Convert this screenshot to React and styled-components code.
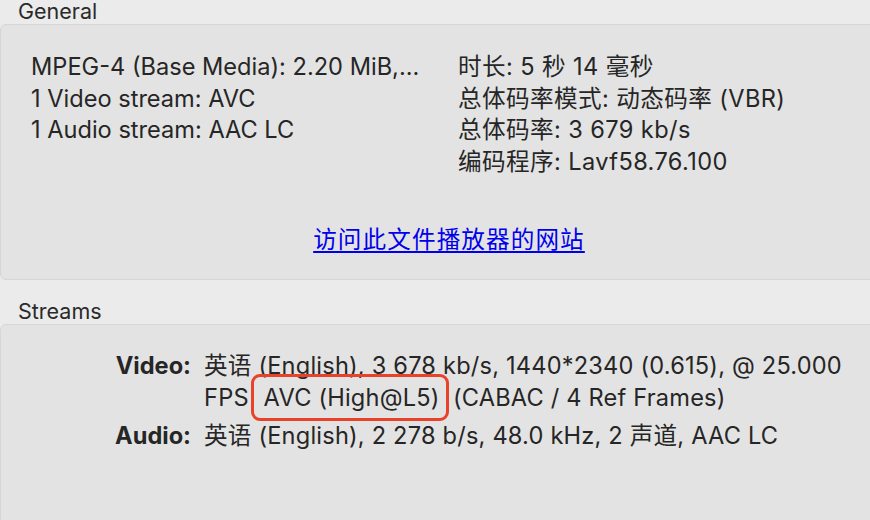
import React from 'react';
import styled, { createGlobalStyle } from 'styled-components';

const Global = createGlobalStyle`
  html, body {
    margin: 0;
    padding: 0;
    background: #ebebeb;
    overflow: hidden;
  }
  body {
    font-family: Inter, "Noto Sans CJK SC", sans-serif;
    color: #262626;
  }
`;

const general = {
  left: [
    'MPEG-4 (Base Media): 2.20 MiB,...',
    '1 Video stream: AVC',
    '1 Audio stream: AAC LC',
  ],
  right: [
    '时长: 5 秒 14 毫秒',
    '总体码率模式: 动态码率 (VBR)',
    '总体码率: 3 679 kb/s',
    '编码程序: Lavf58.76.100',
  ],
};

export default function App() {
  return (
    <Page>
      <Global />
      <SectionTitle>General</SectionTitle>
      <Panel $height={256}>
        <Columns>
          <Column>
            {general.left.map((t) => <Line key={t}>{t}</Line>)}
          </Column>
          <Column $spacing={0.4}>
            {general.right.map((t) => <Line key={t}>{t}</Line>)}
          </Column>
        </Columns>
        <LinkRow>
          <SiteLink href="#">访问此文件播放器的网站</SiteLink>
        </LinkRow>
      </Panel>
      <SectionTitle $top={20}>Streams</SectionTitle>
      <Panel $height={220}>
        <StreamGrid>
          <Label>Video:</Label>
          <Value>
            英语 (English), 3 678 kb/s, 1440*2340 (0.615), @ 25.000
            <br />
            FPS <Highlight>AVC (High@L5)</Highlight> (CABAC / 4 Ref Frames)
          </Value>
          <Label>Audio:</Label>
          <Value>英语 (English), 2 278 b/s, 48.0 kHz, 2 声道, AAC LC</Value>
        </StreamGrid>
      </Panel>
    </Page>
  );
}

const Page = styled.div`
  width: 870px;
  height: 520px;
  overflow: hidden;
`;

const SectionTitle = styled.div`
  box-sizing: border-box;
  padding: ${(p) => p.$top || 0}px 0 0 18px;
  height: ${(p) => (p.$top || 0) + 24}px;
  font-size: 21.5px;
  line-height: 23px;
  color: #2a2a2a;
`;

const Panel = styled.div`
  box-sizing: border-box;
  height: ${(p) => p.$height}px;
  width: 890px;
  background: #e3e3e3;
  border: 1px solid #d6d6d6;
  border-radius: 6px;
  padding-top: 25px;
`;

const Columns = styled.div`
  display: grid;
  grid-template-columns: 427px auto;
  padding-left: 30px;
  padding-top: 1px;
`;

const Column = styled.div`
  display: flex;
  flex-direction: column;
  letter-spacing: ${(p) => p.$spacing || 0}px;
`;

const Line = styled.div`
  font-size: 23.6px;
  line-height: 31.5px;
  white-space: nowrap;
`;

const LinkRow = styled.div`
  box-sizing: border-box;
  width: 870px;
  display: flex;
  justify-content: center;
  margin-top: 49px;
  padding-left: 26px;
`;

const SiteLink = styled.a`
  color: #0000ee;
  font-size: 23.6px;
  line-height: 28px;
  letter-spacing: 1.1px;
  text-decoration: underline;
  text-underline-offset: 3px;
`;

const StreamGrid = styled.div`
  display: grid;
  grid-template-columns: 190px 1fr;
  column-gap: 13px;
  row-gap: 7px;
  font-size: 23.6px;
  line-height: 31.5px;
`;

const Label = styled.div`
  text-align: right;
  font-weight: 700;
`;

const Value = styled.div`
  white-space: nowrap;
  letter-spacing: 0.2px;
`;

const Highlight = styled.span`
  display: inline-block;
  margin: -8.5px -3px -8.5px -5px;
  padding: 5px 6.5px 5px 10px;
  border: 3.5px solid #e8432a;
  border-radius: 9px;
  line-height: 31.5px;
`;
